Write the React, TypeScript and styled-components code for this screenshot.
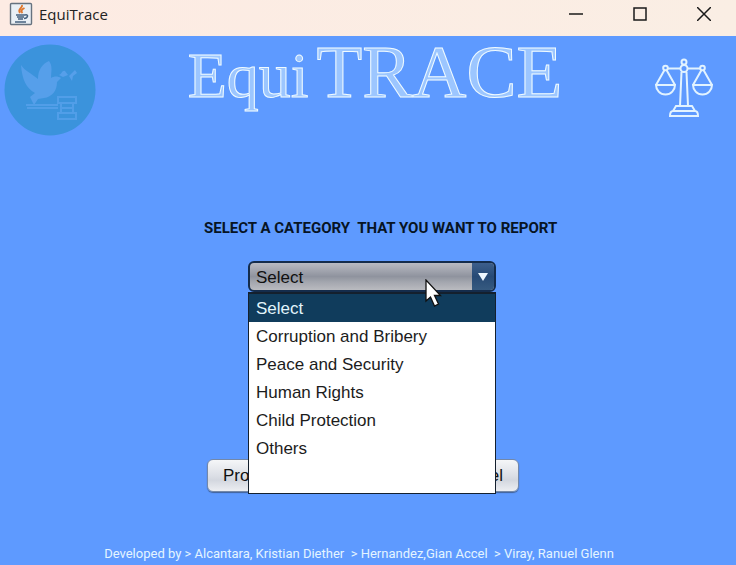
import React, { useState } from "react";
import styled, { createGlobalStyle } from "styled-components";

const GlobalStyle = createGlobalStyle`
  *, *::before, *::after { box-sizing: border-box; }
  body {
    margin: 0;
    background: #5e9aff;
    font-family: "Liberation Sans", Arial, sans-serif;
    color: #101820;
  }
`;

const Window = styled.div`
  display: flex;
  flex-direction: column;
  min-height: 100vh;
  overflow: hidden;
`;

const TitleBar = styled.header`
  display: flex;
  align-items: flex-start;
  justify-content: space-between;
  height: 36px;
  background: linear-gradient(90deg, #fdebe3, #faeee4);
`;

const AppName = styled.div`
  display: flex;
  align-items: center;
  gap: 6px;
  height: 28px;
  padding-left: 9px;
  font: 15px "Open Sans", "Noto Sans", sans-serif;
  color: #222;
`;

const WindowControls = styled.div`
  display: flex;
`;

const WindowButton = styled.button`
  display: grid;
  place-items: center;
  width: 64px;
  height: 28px;
  padding: 0;
  border: 0;
  background: none;
`;

const Banner = styled.div`
  display: flex;
  justify-content: space-between;
  align-items: flex-start;
  height: 104px;
  padding: 8px 22px 0 4px;
`;

const ScalesSlot = styled.div`
  padding-top: 14px;
`;

const Brand = styled.h1`
  display: flex;
  align-items: baseline;
  gap: 8px;
  margin: 0;
  font-family: "Liberation Serif", "Times New Roman", serif;
  font-weight: 400;
  line-height: 56px;
  color: #9cc6ff;
  -webkit-text-stroke: 1px #f0fbff;
`;

const BrandWord = styled.span<{ $large?: boolean }>`
  font-size: ${(p) => (p.$large ? 75 : 64)}px;
`;

const Main = styled.main`
  display: flex;
  flex: 1;
  justify-content: center;
  padding: 76px 0 0 24px;
`;

const Form = styled.form`
  display: flex;
  flex-direction: column;
  width: 352px;
`;

const Label = styled.label`
  font: bold 15px/24px Roboto, "Arial Narrow", sans-serif;
  white-space: pre;
  color: #071424;
`;

const Combo = styled.div`
  position: relative;
  width: 248px;
  margin: 21px 0 0 44px;
`;

const Select = styled.select`
  appearance: none;
  display: block;
  width: 100%;
  height: 31px;
  padding: 2px 32px 0 6px;
  border: 2px solid #142c4c;
  border-radius: 6px;
  background: linear-gradient(#b9bbc3, #8f939e 50%, #a3a6ae 70%, #babbc0);
  font: 17px "Liberation Sans", Arial, sans-serif;
  color: #101010;
  outline: none;
`;

const ComboArrow = styled.span`
  position: absolute;
  top: 2px;
  right: 2px;
  display: grid;
  place-items: center;
  width: 22px;
  height: 27px;
  border-radius: 0 4px 4px 0;
  background: linear-gradient(#3d5f8c, #274a75 50%, #365a80);
  pointer-events: none;
`;

const Popup = styled.ul`
  position: absolute;
  top: 31px;
  left: 0;
  z-index: 1;
  width: 100%;
  height: 202px;
  margin: 0;
  padding: 0;
  border: 1px solid #14202e;
  border-top-width: 2px;
  background: #fff;
  list-style: none;
`;

const Option = styled.li<{ $active: boolean }>`
  height: 28px;
  padding-left: 7px;
  font-size: 17px;
  line-height: 30px;
  color: ${(p) => (p.$active ? "#e2f4fb" : "#1c1c1c")};
  background: ${(p) => (p.$active ? "#103c5c" : "transparent")};
`;

const Pointer = styled.svg`
  position: absolute;
  top: 18px;
  left: 177px;
  z-index: 2;
  pointer-events: none;
`;

const Actions = styled.div`
  display: flex;
  justify-content: space-between;
  width: 312px;
  margin: 167px 0 0 3px;
`;

const ActionButton = styled.button`
  height: 33px;
  padding: 0 15px;
  border: 1px solid #7488a8;
  border-radius: 6px;
  background: linear-gradient(#f5f6f8, #dcdfe6 50%, #d3d7df 65%, #eceef2);
  box-shadow: 0 1px 1px #41629a;
  font: 17px "Liberation Sans", Arial, sans-serif;
  color: #101010;
`;

const Credits = styled.footer`
  padding: 0 18px 3px 0;
  font: 13px/16px Roboto, "Liberation Sans", sans-serif;
  text-align: center;
  white-space: pre;
  color: #e4f5ff;
`;

const categories = [
  "Select",
  "Corruption and Bribery",
  "Peace and Security",
  "Human Rights",
  "Child Protection",
  "Others",
];

function JavaIcon() {
  return (
    <svg width="24" height="24" viewBox="0 0 24 24" aria-hidden="true">
      <rect x="1.5" y="1.5" width="21" height="21" rx="1" fill="#e9eff5" stroke="#66727f" strokeWidth="1.4" />
      <path d="M13 3c1 3-5 4-2 8M15.500 6c-3 1.500-4 3-2 5" fill="none" stroke="#e0762c" strokeWidth="1.900" />
      <path d="M7 13h9M8 15h7M9 17h5M6 20h11M16 13c4-1 3 3-1 3.500" fill="none" stroke="#45617f" strokeWidth="1.500" />
    </svg>
  );
}

function DoveBadge() {
  return (
    <svg width="92" height="92" viewBox="0 0 92 92" aria-hidden="true">
      <circle cx="46" cy="46" r="45.500" fill="#3b93dc" />
      <g fill="#569fea">
        <path d="M17 21c4 6 10 8 17 14 0-9 4-15 11-18 4 5 2 11 2 17 3-2 7-2 10 0l-4 4c0 9-5 15-13 16l-6 1-4 6-4-8 5-4c-9-5-13-14-14-28z" />
        <path d="M55 31c3-1 3-5 6-4l3 4-5 2zM65 32l6-6 2 3-4 3-1 5z" />
      </g>
      <g fill="none" stroke="#519ee8" strokeWidth="2">
        <path d="M22 61h32M23 64h31" />
        <path d="M54 53h18v6H54zM54 69h18v6H54zM57 59v10M69 59v10M57 64h12" />
      </g>
    </svg>
  );
}

function ScalesIcon() {
  return (
    <svg width="60" height="60" viewBox="0 0 60 60" fill="none" stroke="#e2f3ff" strokeWidth="2" aria-hidden="true">
      <circle cx="30" cy="4" r="2.500" />
      <circle cx="30" cy="10.500" r="3.500" />
      <circle cx="11.500" cy="10" r="2.300" />
      <circle cx="48.500" cy="10" r="2.300" />
      <path d="M14 10.500h12M34 10.500h12" />
      <path d="M27.500 14L26 48M32.500 14L34 48" />
      <path d="M10.500 12L2 27M12.500 12L21 27M2 27h19c0 5-4 9.500-9.500 9.500S2 32 2 27z" />
      <path d="M47.500 12L39 27M49.500 12L58 27M39 27h19c0 5-4 9.500-9.500 9.500S39 32 39 27z" />
      <path d="M22 48h16l3 5H19zM19 53h22c2 0 3 2 3 5H16c0-3 1-5 3-5z" />
    </svg>
  );
}

export default function App() {
  const [category, setCategory] = useState(categories[0]);
  const [open, setOpen] = useState(true);

  const choose = (name: string) => {
    setCategory(name);
    setOpen(false);
  };

  return (
    <Window>
      <GlobalStyle />
      <TitleBar>
        <AppName>
          <JavaIcon />
          EquiTrace
        </AppName>
        <WindowControls>
          <WindowButton aria-label="Minimize">
            <svg width="14" height="14" stroke="#1a1a1a" strokeWidth="1.500">
              <path d="M0 7h14" />
            </svg>
          </WindowButton>
          <WindowButton aria-label="Maximize">
            <svg width="14" height="14" fill="none" stroke="#1a1a1a" strokeWidth="1.500">
              <rect x="1" y="1" width="12" height="12" />
            </svg>
          </WindowButton>
          <WindowButton aria-label="Close">
            <svg width="14" height="14" stroke="#1a1a1a" strokeWidth="1.500">
              <path d="M0 0l14 14M14 0L0 14" />
            </svg>
          </WindowButton>
        </WindowControls>
      </TitleBar>

      <Banner>
        <DoveBadge />
        <Brand>
          <BrandWord>Equi</BrandWord>
          <BrandWord $large>TRACE</BrandWord>
        </Brand>
        <ScalesSlot>
          <ScalesIcon />
        </ScalesSlot>
      </Banner>

      <Main>
        <Form onSubmit={(e) => e.preventDefault()}>
          <Label htmlFor="category">{"SELECT A CATEGORY  THAT YOU WANT TO REPORT"}</Label>
          <Combo>
            <Select
              id="category"
              value={category}
              onMouseDown={(e) => {
                e.preventDefault();
                setOpen(!open);
              }}
              onChange={(e) => choose(e.target.value)}
            >
              {categories.map((name) => (
                <option key={name}>{name}</option>
              ))}
            </Select>
            <ComboArrow>
              <svg width="12" height="8" aria-hidden="true">
                <path d="M1 0h10L6 8z" fill="#eef8ff" />
              </svg>
            </ComboArrow>
            {open && (
              <Popup role="listbox" aria-label="Category">
                {categories.map((name) => (
                  <Option
                    key={name}
                    role="option"
                    aria-selected={name === category}
                    $active={name === category}
                    onClick={() => choose(name)}
                  >
                    {name}
                  </Option>
                ))}
              </Popup>
            )}
            <Pointer width="18" height="30" viewBox="0 0 18 30" aria-hidden="true">
              <path d="M1 1v21l4.500-4 4 9 4-2-4-8.500h6z" fill="#fff" stroke="#111" strokeWidth="1.300" />
            </Pointer>
          </Combo>
          <Actions>
            <ActionButton type="submit">Proceed</ActionButton>
            <ActionButton type="button">Cancel</ActionButton>
          </Actions>
        </Form>
      </Main>

      <Credits>
        {"Developed by > Alcantara, Kristian Diether  > Hernandez,Gian Accel  > Viray, Ranuel Glenn"}
      </Credits>
    </Window>
  );
}
